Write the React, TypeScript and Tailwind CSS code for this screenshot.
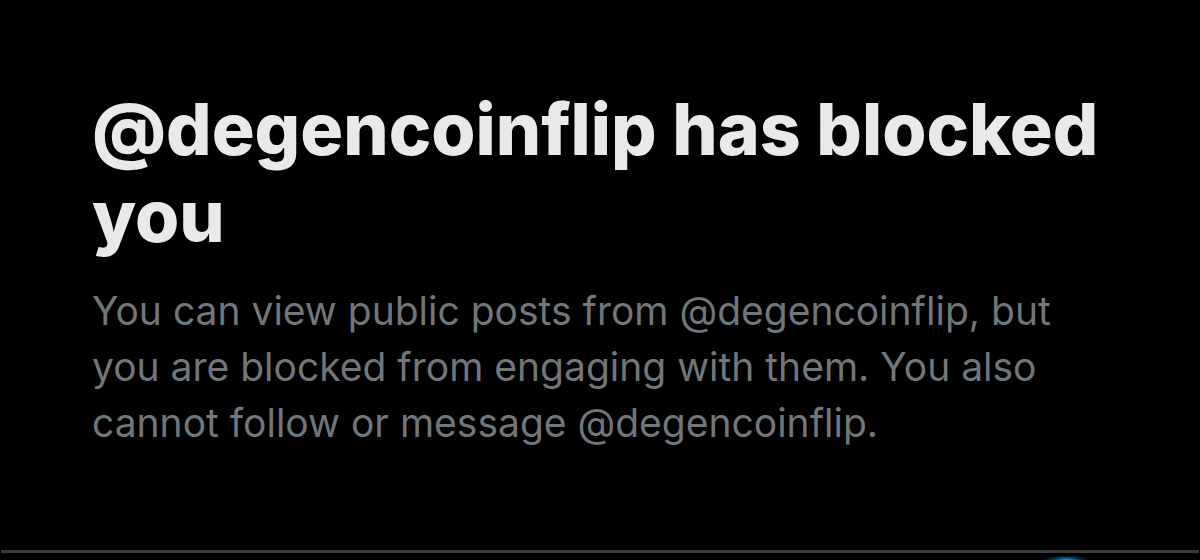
export default function App() {
  return (
    <div className="w-[1200px] h-[560px] bg-black overflow-hidden flex flex-col font-['Inter',sans-serif]">
      <div className="flex-1 pl-[92px] pt-[86px]">
        <h1 className="w-[1060px] text-[#e7e9ea] font-extrabold text-[71.5px] leading-[87px]">
          @degencoinflip has blocked you
        </h1>
        <p className="mt-[23px] w-[1000px] text-[#71767b] text-[39px] leading-[56px]">
          You can view public posts from @degencoinflip, but you are blocked from engaging with them. You also cannot follow or message @degencoinflip.
        </p>
      </div>
      <div className="relative h-[10px]">
        <div className="mx-[1px] h-[3px] bg-[#3a3b3d]" />
        <div className="absolute left-[1042px] top-[5px] w-[48px] h-[10px] rounded-full bg-[radial-gradient(ellipse_at_center,#1d9bf0_0%,rgba(29,155,240,0.3)_40%,transparent_70%)]" />
      </div>
    </div>
  );
}
